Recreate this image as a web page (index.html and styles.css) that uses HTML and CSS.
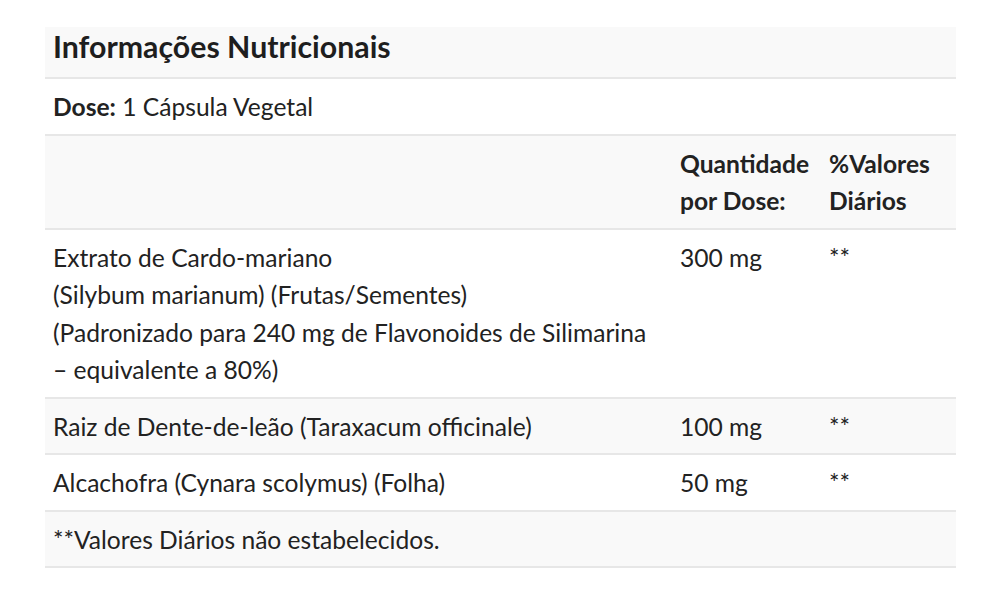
FILE: index.html
```html
<!DOCTYPE html>
<html lang="pt">
<head>
<meta charset="utf-8">
<title>Informações Nutricionais</title>
<link rel="stylesheet" href="styles.css">
</head>
<body>
<div class="page">
  <table class="nutri">
    <colgroup>
      <col class="c1">
      <col class="c2">
      <col class="c3">
    </colgroup>
    <thead>
      <tr class="title-row"><th colspan="3">Informações Nutricionais</th></tr>
    </thead>
    <tbody>
      <tr class="dose-row"><td colspan="3"><strong>Dose:</strong> 1 Cápsula Vegetal</td></tr>
      <tr class="head-row stripe">
        <td></td>
        <td><strong>Quantidade por Dose:</strong></td>
        <td><strong>%Valores Diários</strong></td>
      </tr>
      <tr>
        <td>Extrato de Cardo-mariano<br>(Silybum marianum) (Frutas/Sementes)<br>(Padronizado para 240 mg de Flavonoides de Silimarina<br>– equivalente a 80%)</td>
        <td>300 mg</td>
        <td>**</td>
      </tr>
      <tr class="stripe">
        <td>Raiz de Dente-de-leão (Taraxacum officinale)</td>
        <td>100 mg</td>
        <td>**</td>
      </tr>
      <tr>
        <td>Alcachofra (Cynara scolymus) (Folha)</td>
        <td>50 mg</td>
        <td>**</td>
      </tr>
      <tr class="stripe">
        <td colspan="3">**Valores Diários não estabelecidos.</td>
      </tr>
    </tbody>
  </table>
</div>
</body>
</html>
```

FILE: styles.css
```css
html, body {
  margin: 0;
  padding: 0;
  background: #ffffff;
}

body {
  font-family: Lato, "Open Sans", sans-serif;
  color: #222222;
}

.page {
  padding: 27px 45px 0 45px;
}

.nutri {
  width: 911px;
  border-collapse: collapse;
  table-layout: fixed;
  font-size: 24.6px;
  line-height: 37.5px;
}

.c1 { width: 627px; }
.c2 { width: 149px; }
.c3 { width: 135px; }

.nutri th,
.nutri td {
  text-align: left;
  vertical-align: top;
  padding: 9px 8px 8px 8px;
  border-bottom: 2px solid #e7e7e7;
}

.title-row th {
  background: #f9f9f9;
  font-size: 30.3px;
  font-weight: 700;
  line-height: 36px;
  padding: 1px 8px 13px 8px;
  color: #1e1e1e;
}

.nutri strong {
  font-weight: 700;
}

.stripe td {
  background: #f9f9f9;
}
```
